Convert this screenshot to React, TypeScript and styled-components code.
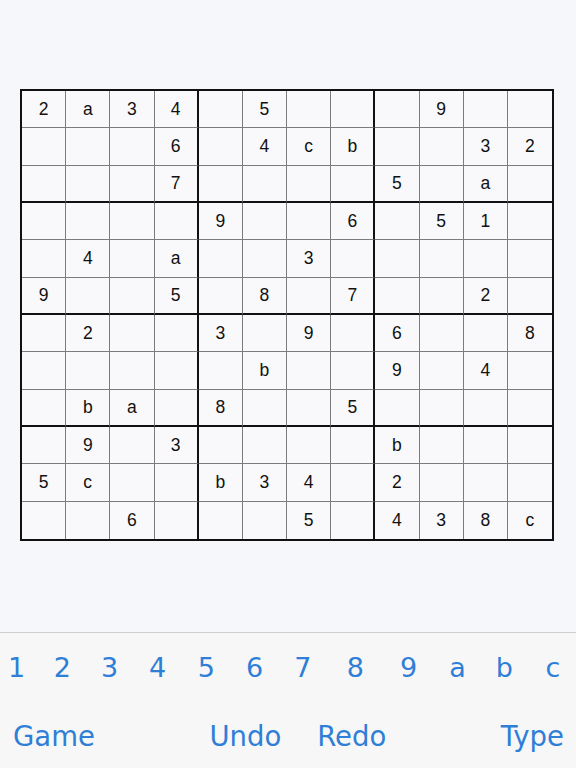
import React from "react";
import styled, { createGlobalStyle } from "styled-components";

const GlobalStyle = createGlobalStyle`
  html, body { margin: 0; padding: 0; }
  body { background: #f5f7fb; font-family: "Liberation Sans", Arial, sans-serif; }
  * { box-sizing: border-box; }
`;

const Page = styled.div`
  width: 576px;
  height: 768px;
  display: flex;
  flex-direction: column;
  overflow: hidden;
`;

const BoardArea = styled.div`
  height: 633px;
  background: #f5f7fb;
  padding: 89px 0 0 20px;
`;

const Board = styled.div`
  width: 534px;
  height: 452px;
  border: 2px solid #111;
  display: grid;
  grid-template-columns: repeat(12, 1fr);
  grid-template-rows: repeat(12, 1fr);
  background: #f9f9fb;
`;

const Cell = styled.div<{ $col: number; $row: number }>`
  display: flex;
  align-items: center;
  justify-content: center;
  font-family: "Liberation Sans", Arial, sans-serif;
  font-size: 17.5px;
  color: #111;
  border-right: ${(p) =>
    p.$col === 11 ? "none" : p.$col % 4 === 3 ? "2px solid #111" : "1px solid #7c7c7c"};
  border-bottom: ${(p) =>
    p.$row === 11 ? "none" : p.$row % 3 === 2 ? "2px solid #111" : "1px solid #7c7c7c"};
`;

const Toolbar = styled.div`
  flex: 1;
  background: #f7f7f7;
  border-top: 1px solid #cfcfd4;
  display: flex;
  flex-direction: column;
`;

const KeyRow = styled.div`
  height: 68px;
  display: flex;
  align-items: center;
  padding: 0 0 0 8px;
`;

const Key = styled.span<{ $lead: number }>`
  font-family: "DejaVu Sans", Verdana, sans-serif;
  font-size: 27px;
  color: #2f7fd7;
  margin-left: ${(p) => p.$lead}px;
`;

const ActionRow = styled.div`
  height: 67px;
  display: flex;
  align-items: center;
  justify-content: space-between;
  padding: 2px 12px 0 13px;
`;

const ActionGroup = styled.div`
  display: flex;
  gap: 36px;
`;

const Action = styled.span`
  font-family: "DejaVu Sans", Verdana, sans-serif;
  font-size: 27.5px;
  color: #2f7fd7;
`;

const rows: string[] = [
  "2a34.5...9..",
  "...6.4cb..32",
  "...7....5.a.",
  "....9..6.51.",
  ".4.a..3.....",
  "9..5.8.7..2.",
  ".2..3.9.6..8",
  ".....b..9.4.",
  ".ba.8..5....",
  ".9.3....b...",
  "5c..b34.2...",
  "..6...5.438c",
];

const keys: { label: string; lead: number }[] = [
  { label: "1", lead: 0 },
  { label: "2", lead: 28.5 },
  { label: "3", lead: 30 },
  { label: "4", lead: 31 },
  { label: "5", lead: 31.5 },
  { label: "6", lead: 31 },
  { label: "7", lead: 31 },
  { label: "8", lead: 35.5 },
  { label: "9", lead: 36 },
  { label: "a", lead: 32 },
  { label: "b", lead: 30 },
  { label: "c", lead: 32.5 },
];

export default function App() {
  return (
    <>
      <GlobalStyle />
      <Page>
        <BoardArea>
          <Board>
            {rows.map((r, ri) =>
              r.split("").map((ch, ci) => (
                <Cell key={`${ri}-${ci}`} $row={ri} $col={ci}>
                  {ch === "." ? "" : ch}
                </Cell>
              ))
            )}
          </Board>
        </BoardArea>
        <Toolbar>
          <KeyRow>
            {keys.map((k) => (
              <Key key={k.label} $lead={k.lead}>
                {k.label}
              </Key>
            ))}
          </KeyRow>
          <ActionRow>
            <Action>Game</Action>
            <ActionGroup>
              <Action>Undo</Action>
              <Action>Redo</Action>
            </ActionGroup>
            <Action>Type</Action>
          </ActionRow>
        </Toolbar>
      </Page>
    </>
  );
}
